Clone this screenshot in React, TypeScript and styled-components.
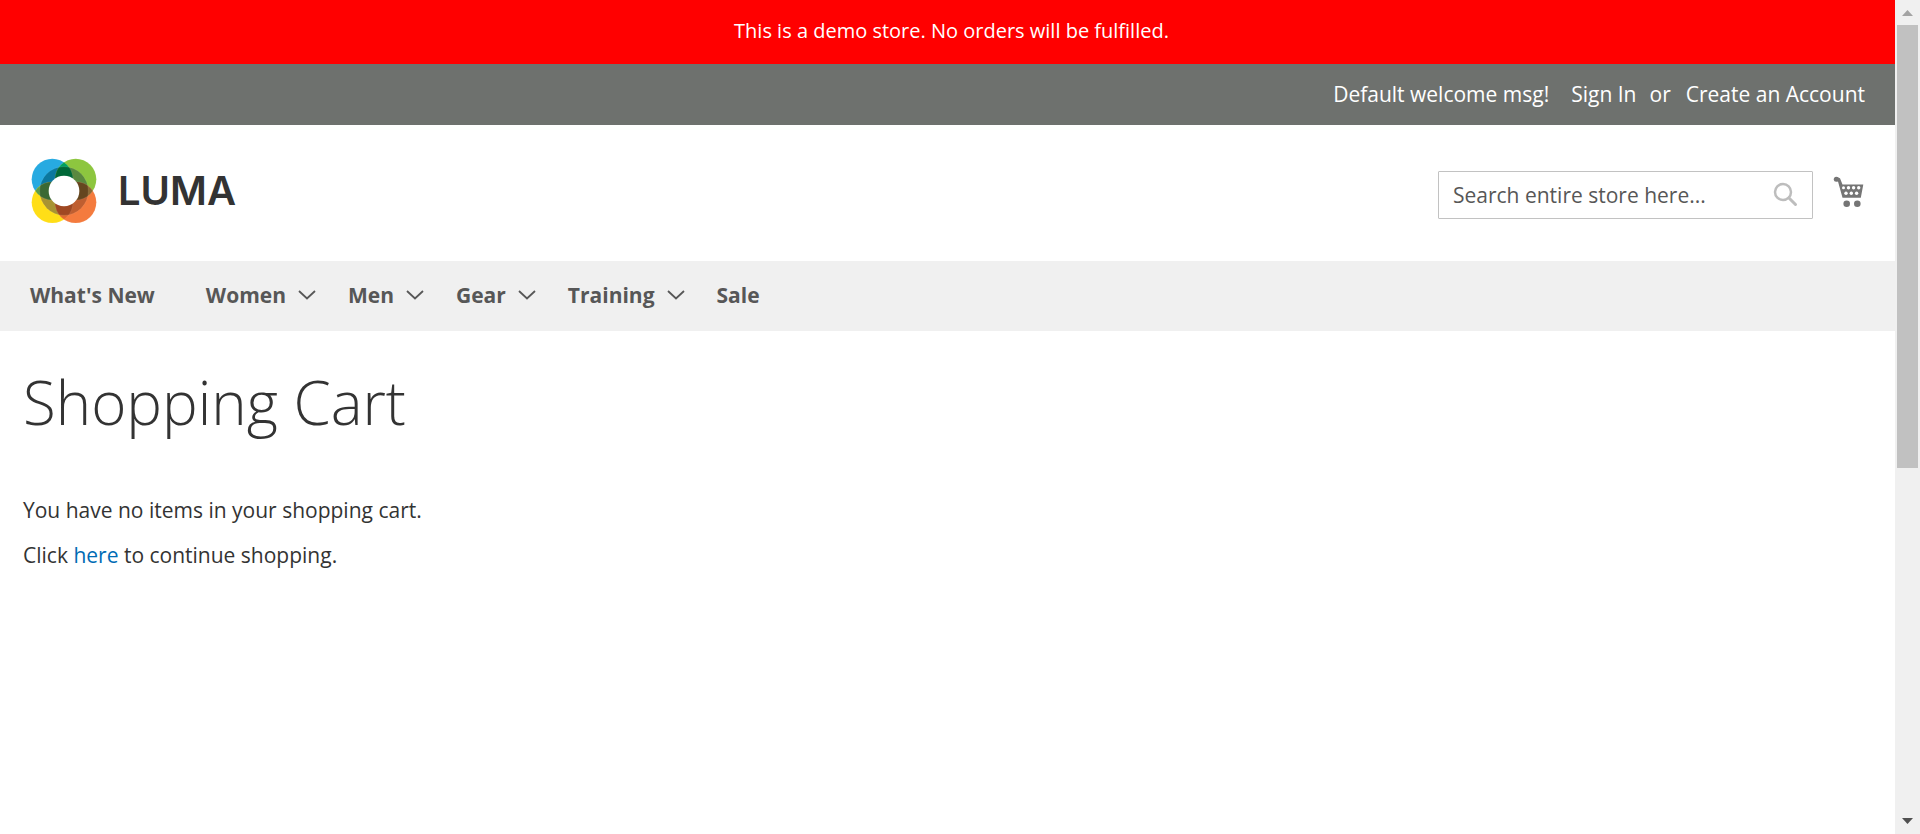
import React from 'react';
import styled, { createGlobalStyle } from 'styled-components';

const GlobalStyle = createGlobalStyle`
  *, *::before, *::after { box-sizing: border-box; }
  body {
    margin: 0;
    background: #fff;
    color: #333;
    font-family: 'Open Sans', 'Noto Sans', sans-serif;
    font-size: 21px;
    line-height: 30px;
  }
`;

const Screen = styled.div`
  display: flex;
  align-items: flex-start;
`;

const Page = styled.div`
  flex: 1;
  min-width: 0;
`;

const DemoNotice = styled.p`
  margin: 0;
  padding: 16px 15px 18px 23px;
  background: #f00;
  color: #fff;
  font-size: 20px;
  text-align: center;
`;

const Panel = styled.div`
  display: flex;
  justify-content: flex-end;
  align-items: center;
  padding: 15px 30px 16px;
  background: #6e716e;
  color: #fff;
`;

const Welcome = styled.span`
  margin-right: 22px;
`;

const PanelLink = styled.a`
  color: #fff;
  text-decoration: none;
`;

const Or = styled.span`
  margin: 0 15px 0 13px;
`;

const Header = styled.header`
  display: flex;
  align-items: center;
  justify-content: space-between;
  padding: 30px 30px 34px;
`;

const LogoLink = styled.a`
  display: flex;
  align-items: center;
  gap: 20px;
  height: 72px;
  color: #333;
  text-decoration: none;
`;

const Wordmark = styled.span`
  font-family: Inter, sans-serif;
  font-size: 40px;
  font-weight: 600;
`;

const Tools = styled.div`
  display: flex;
  align-items: center;
  gap: 20px;
  padding-top: 8px;
`;

const SearchForm = styled.form`
  display: flex;
  align-items: center;
  width: 375px;
  height: 48px;
  border: 1px solid #c2c2c2;
  border-radius: 1px;
`;

const SearchInput = styled.input`
  flex: 1;
  min-width: 0;
  height: 46px;
  padding: 0 0 0 14px;
  border: 0;
  outline: 0;
  background: none;
  color: #333;
  font: inherit;
  &::placeholder { color: #575757; opacity: 1; }
`;

const IconButton = styled.button`
  display: flex;
  padding: 0;
  border: 0;
  background: none;
`;

const SearchButton = styled(IconButton)`
  margin-right: 14px;
`;

const CartLink = styled.a`
  display: flex;
`;

const Nav = styled.nav`
  padding: 0 30px;
  background: #f0f0f0;
`;

const NavList = styled.ul`
  display: flex;
  margin: 0;
  padding: 0;
  list-style: none;
`;

const NavItem = styled.li<{ $wide?: boolean }>`
  margin-right: ${(p) => (p.$wide ? 51 : 32)}px;
`;

const NavLink = styled.a`
  display: flex;
  align-items: center;
  gap: 12px;
  padding: 19px 0 21px;
  color: #575757;
  font-weight: 700;
  text-decoration: none;
`;

const Main = styled.main`
  padding: 0 23px;
`;

const Title = styled.h1`
  margin: 36px 0 58px;
  font-size: 60px;
  font-weight: 300;
  line-height: 70px;
`;

const Text = styled.p`
  margin: 0 0 15px;
`;

const TextLink = styled.a`
  color: #006bb4;
  text-decoration: none;
`;

const ScrollTrack = styled.div`
  position: sticky;
  top: 0;
  display: flex;
  flex-direction: column;
  align-items: center;
  width: 25px;
  height: 100vh;
  background: #f0f0f0;
`;

const ScrollThumb = styled.div`
  width: 21px;
  height: 443px;
  margin-bottom: auto;
  background: #c1c1c1;
`;

const ScrollArrow = ({ down }: { down?: boolean }) => (
  <svg width="25" height="25" viewBox="0 0 25 25" aria-hidden="true">
    <path d={down ? 'M7 9h11l-5.5 6z' : 'M7 16h11l-5.5-6z'} fill={down ? '#505050' : '#a3a3a3'} />
  </svg>
);

const LogoMark = () => (
  <svg width="68" height="68" viewBox="89 51 204 204" aria-hidden="true">
    <defs>
      <clipPath id="left-blue"><circle cx="156" cy="118" r="62" /></clipPath>
      <clipPath id="right-orange"><circle cx="226" cy="187" r="62" /></clipPath>
      <clipPath id="ring"><circle cx="191" cy="153" r="73" /></clipPath>
    </defs>
    <circle cx="156" cy="118" r="62" fill="#27aae1" />
    <circle cx="226" cy="118" r="62" fill="#8dc63f" />
    <circle cx="156" cy="187" r="62" fill="#ffde17" />
    <circle cx="226" cy="187" r="62" fill="#f47b3e" />
    <g clipPath="url(#left-blue)">
      <circle cx="226" cy="118" r="62" fill="#00a160" />
      <circle cx="156" cy="187" r="62" fill="#5a9e48" />
    </g>
    <g clipPath="url(#right-orange)">
      <circle cx="226" cy="118" r="62" fill="#8a6a35" />
      <circle cx="156" cy="187" r="62" fill="#e06a2c" />
    </g>
    <g clipPath="url(#ring)">
      <circle cx="156" cy="118" r="62" fill="#0b789f" />
      <circle cx="226" cy="118" r="62" fill="#5a883f" />
      <circle cx="156" cy="187" r="62" fill="#a89332" />
      <circle cx="226" cy="187" r="62" fill="#bf5e30" />
      <g clipPath="url(#left-blue)">
        <circle cx="226" cy="118" r="62" fill="#006838" />
        <circle cx="156" cy="187" r="62" fill="#3b6934" />
      </g>
      <g clipPath="url(#right-orange)">
        <circle cx="226" cy="118" r="62" fill="#65461f" />
        <circle cx="156" cy="187" r="62" fill="#9f4822" />
      </g>
    </g>
    <g fill="none" stroke="#fff" strokeOpacity="0.25" strokeWidth="1">
      <circle cx="156" cy="118" r="62" />
      <circle cx="226" cy="118" r="62" />
      <circle cx="156" cy="187" r="62" />
      <circle cx="226" cy="187" r="62" />
      <circle cx="191" cy="153" r="73" />
    </g>
    <circle cx="191" cy="153" r="46" fill="#fff" />
  </svg>
);

const SearchIcon = () => (
  <svg width="26" height="26" viewBox="0 0 26 26" fill="none" stroke="#bdbdbd" aria-hidden="true">
    <circle cx="11" cy="10" r="8" strokeWidth="2.5" />
    <path d="M17 16l6.5 6.5" strokeWidth="3" strokeLinecap="round" />
  </svg>
);

const CartIcon = () => (
  <svg width="32" height="40" viewBox="0 0 32 40" aria-hidden="true">
    <g fill="#757575">
      <circle cx="3.3" cy="4.3" r="2.5" />
      <path d="M4 2l3 1.200 2.500 6.300h20.800l-2.500 13.300H9.500L5 6.500 3 6z" />
      <circle cx="13.700" cy="28.700" r="3.300" />
      <circle cx="24.300" cy="28.700" r="3.300" />
    </g>
    <g fill="#fff">
      <circle cx="10.500" cy="12.800" r="1.500" />
      <circle cx="15.500" cy="12.800" r="1.700" />
      <circle cx="20.600" cy="12.800" r="1.700" />
      <circle cx="25.700" cy="12.800" r="1.700" />
      <circle cx="13" cy="18.300" r="1.700" />
      <circle cx="18.300" cy="18.300" r="1.700" />
      <circle cx="23.600" cy="18.300" r="1.700" />
    </g>
  </svg>
);

const Chevron = () => (
  <svg width="18" height="10" viewBox="0 0 18 10" fill="none" stroke="#575757" strokeWidth="1.8" aria-hidden="true">
    <path d="M1 1l8 7.5L17 1" />
  </svg>
);

const menu = [
  { label: "What's New" },
  { label: 'Women', sub: true },
  { label: 'Men', sub: true },
  { label: 'Gear', sub: true },
  { label: 'Training', sub: true },
  { label: 'Sale' },
];

export default function App() {
  return (
    <Screen>
      <GlobalStyle />
      <Page>
        <DemoNotice>This is a demo store. No orders will be fulfilled.</DemoNotice>
        <Panel>
          <Welcome>Default welcome msg!</Welcome>
          <PanelLink href="#signin">Sign In</PanelLink>
          <Or>or</Or>
          <PanelLink href="#create">Create an Account</PanelLink>
        </Panel>
        <Header>
          <LogoLink href="#home">
            <LogoMark />
            <Wordmark>LUMA</Wordmark>
          </LogoLink>
          <Tools>
            <SearchForm role="search" onSubmit={(e) => e.preventDefault()}>
              <SearchInput type="text" aria-label="Search" placeholder="Search entire store here..." />
              <SearchButton type="submit" aria-label="Submit search"><SearchIcon /></SearchButton>
            </SearchForm>
            <CartLink href="#cart" aria-label="My Cart"><CartIcon /></CartLink>
          </Tools>
        </Header>
        <Nav>
          <NavList>
            {menu.map((m) => (
              <NavItem key={m.label} $wide={!m.sub}>
                <NavLink href="#">
                  {m.label}
                  {m.sub && <Chevron />}
                </NavLink>
              </NavItem>
            ))}
          </NavList>
        </Nav>
        <Main>
          <Title>Shopping Cart</Title>
          <Text>You have no items in your shopping cart.</Text>
          <Text>Click <TextLink href="#shop">here</TextLink> to continue shopping.</Text>
        </Main>
      </Page>
      <ScrollTrack>
        <ScrollArrow />
        <ScrollThumb />
        <ScrollArrow down />
      </ScrollTrack>
    </Screen>
  );
}
